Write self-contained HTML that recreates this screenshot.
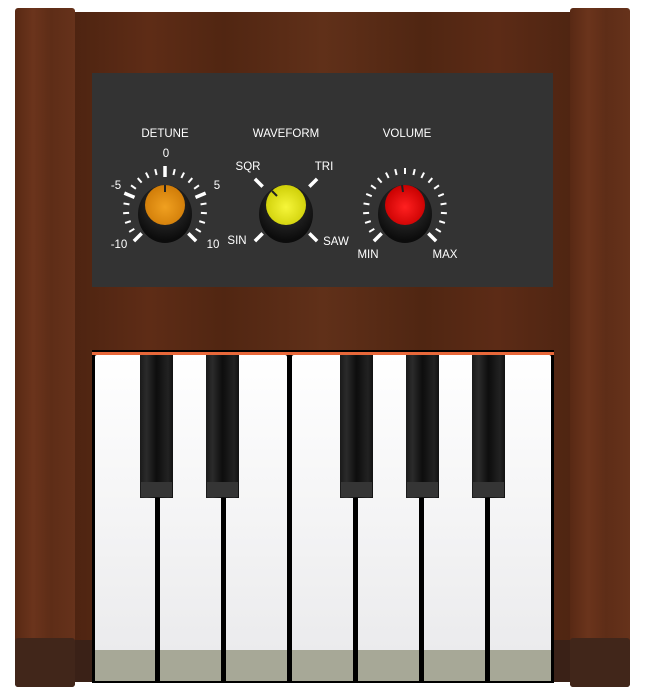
<!DOCTYPE html>
<html><head><meta charset="utf-8"><style>
html,body{margin:0;padding:0;background:#fff;width:645px;height:700px;overflow:hidden}
svg{display:block;font-family:"Liberation Sans",sans-serif}
</style></head><body>
<svg width="645" height="700" viewBox="0 0 645 700" xmlns="http://www.w3.org/2000/svg">
<defs>
<linearGradient id="wood" x1="0" x2="1" y1="0" y2="0">
<stop offset="0" stop-color="#4e2411"/><stop offset="0.15" stop-color="#5e2c16"/><stop offset="0.3" stop-color="#512612"/><stop offset="0.5" stop-color="#603019"/><stop offset="0.7" stop-color="#502612"/><stop offset="0.85" stop-color="#5c2b16"/><stop offset="1" stop-color="#4f2512"/>
</linearGradient>
<linearGradient id="pil" x1="0" x2="1">
<stop offset="0" stop-color="#582914"/><stop offset="0.3" stop-color="#6b341c"/><stop offset="0.6" stop-color="#5e2d17"/><stop offset="1" stop-color="#66321b"/>
</linearGradient>
<linearGradient id="wk" x1="0" x2="0" y1="0" y2="1">
<stop offset="0" stop-color="#ffffff"/><stop offset="1" stop-color="#e9e9eb"/>
</linearGradient>
<linearGradient id="bk" x1="0" x2="1">
<stop offset="0" stop-color="#1a1a1a"/><stop offset="0.2" stop-color="#2b2b2b"/><stop offset="0.5" stop-color="#0d0d0d"/><stop offset="0.85" stop-color="#222"/><stop offset="1" stop-color="#111"/>
</linearGradient>
<radialGradient id="body" cx="0.5" cy="0.35" r="0.6"><stop offset="0" stop-color="#3a3a3a"/><stop offset="1" stop-color="#0c0c0c"/></radialGradient>
<radialGradient id="og" cx="0.5" cy="0.55" r="0.55"><stop offset="0" stop-color="#f0a020"/><stop offset="1" stop-color="#d07c08"/></radialGradient>
<radialGradient id="yg" cx="0.5" cy="0.55" r="0.55"><stop offset="0" stop-color="#f6f63a"/><stop offset="1" stop-color="#cfcf08"/></radialGradient>
<radialGradient id="rg" cx="0.5" cy="0.55" r="0.55"><stop offset="0" stop-color="#ff2020"/><stop offset="1" stop-color="#c80000"/></radialGradient>
</defs>
<rect x="74" y="12" width="498" height="670" fill="url(#wood)"/>
<rect x="74" y="640" width="498" height="42" fill="#3a2117"/>
<rect x="15" y="8" width="60" height="679" rx="3" fill="url(#pil)"/>
<rect x="15" y="638" width="60" height="49" rx="3" fill="#41261a"/>
<rect x="570" y="8" width="60" height="679" rx="3" fill="url(#pil)"/>
<rect x="570" y="638" width="60" height="49" rx="3" fill="#41261a"/>
<rect x="92" y="73" width="461" height="214" fill="#333333"/>
<g fill="#fff" font-size="11.5" text-anchor="middle">
<text x="165" y="137">DETUNE</text><text x="286" y="137">WAVEFORM</text><text x="407" y="137">VOLUME</text>
<text x="166" y="157">0</text><text x="116" y="189">-5</text><text x="217" y="189">5</text>
<text x="119" y="248">-10</text><text x="213" y="248">10</text>
<text x="248" y="170">SQR</text><text x="324" y="170">TRI</text>
<text x="237" y="244">SIN</text><text x="336" y="245">SAW</text>
<text x="368" y="258">MIN</text><text x="445" y="258">MAX</text>
</g>
<g stroke="#fff" stroke-linecap="butt">
<g transform="translate(165,210)">
<g stroke-width="2">
<line x1="0" y1="-36" x2="0" y2="-42" transform="rotate(-121.5)"/><line x1="0" y1="-36" x2="0" y2="-42" transform="rotate(-108)"/><line x1="0" y1="-36" x2="0" y2="-42" transform="rotate(-94.5)"/><line x1="0" y1="-36" x2="0" y2="-42" transform="rotate(-81)"/><line x1="0" y1="-36" x2="0" y2="-42" transform="rotate(-54)"/><line x1="0" y1="-36" x2="0" y2="-42" transform="rotate(-40.5)"/><line x1="0" y1="-36" x2="0" y2="-42" transform="rotate(-27)"/><line x1="0" y1="-36" x2="0" y2="-42" transform="rotate(-13.5)"/>
<line x1="0" y1="-36" x2="0" y2="-42" transform="rotate(121.5)"/><line x1="0" y1="-36" x2="0" y2="-42" transform="rotate(108)"/><line x1="0" y1="-36" x2="0" y2="-42" transform="rotate(94.5)"/><line x1="0" y1="-36" x2="0" y2="-42" transform="rotate(81)"/><line x1="0" y1="-36" x2="0" y2="-42" transform="rotate(54)"/><line x1="0" y1="-36" x2="0" y2="-42" transform="rotate(40.5)"/><line x1="0" y1="-36" x2="0" y2="-42" transform="rotate(27)"/><line x1="0" y1="-36" x2="0" y2="-42" transform="rotate(13.5)"/>
</g>
<g stroke-width="3.5">
<line x1="0" y1="-33" x2="0" y2="-44" transform="rotate(-135)"/><line x1="0" y1="-33" x2="0" y2="-44" transform="rotate(-67.5)"/><line x1="0" y1="-33" x2="0" y2="-44"/><line x1="0" y1="-33" x2="0" y2="-44" transform="rotate(67.5)"/><line x1="0" y1="-33" x2="0" y2="-44" transform="rotate(135)"/>
</g></g>
<g transform="translate(286,210)" stroke-width="3.5">
<line x1="0" y1="-33" x2="0" y2="-44" transform="rotate(-135)"/><line x1="0" y1="-33" x2="0" y2="-44" transform="rotate(-45)"/><line x1="0" y1="-33" x2="0" y2="-44" transform="rotate(45)"/><line x1="0" y1="-33" x2="0" y2="-44" transform="rotate(135)"/>
</g>
<g transform="translate(405,210)">
<g stroke-width="2">
<line x1="0" y1="-36" x2="0" y2="-42" transform="rotate(-121.5)"/><line x1="0" y1="-36" x2="0" y2="-42" transform="rotate(-108)"/><line x1="0" y1="-36" x2="0" y2="-42" transform="rotate(-94.5)"/><line x1="0" y1="-36" x2="0" y2="-42" transform="rotate(-81)"/><line x1="0" y1="-36" x2="0" y2="-42" transform="rotate(-67.5)"/><line x1="0" y1="-36" x2="0" y2="-42" transform="rotate(-54)"/><line x1="0" y1="-36" x2="0" y2="-42" transform="rotate(-40.5)"/><line x1="0" y1="-36" x2="0" y2="-42" transform="rotate(-27)"/><line x1="0" y1="-36" x2="0" y2="-42" transform="rotate(-13.5)"/><line x1="0" y1="-36" x2="0" y2="-42"/>
<line x1="0" y1="-36" x2="0" y2="-42" transform="rotate(121.5)"/><line x1="0" y1="-36" x2="0" y2="-42" transform="rotate(108)"/><line x1="0" y1="-36" x2="0" y2="-42" transform="rotate(94.5)"/><line x1="0" y1="-36" x2="0" y2="-42" transform="rotate(81)"/><line x1="0" y1="-36" x2="0" y2="-42" transform="rotate(67.5)"/><line x1="0" y1="-36" x2="0" y2="-42" transform="rotate(54)"/><line x1="0" y1="-36" x2="0" y2="-42" transform="rotate(40.5)"/><line x1="0" y1="-36" x2="0" y2="-42" transform="rotate(27)"/><line x1="0" y1="-36" x2="0" y2="-42" transform="rotate(13.5)"/>
</g>
<g stroke-width="3.5"><line x1="0" y1="-33" x2="0" y2="-44" transform="rotate(-135)"/><line x1="0" y1="-33" x2="0" y2="-44" transform="rotate(135)"/></g>
</g>
</g>
<g>
<ellipse cx="165" cy="214" rx="27" ry="29" fill="url(#body)"/>
<circle cx="165" cy="205" r="20" fill="url(#og)"/>
<line x1="165" y1="185" x2="165" y2="192" stroke="#222" stroke-width="2"/>
<ellipse cx="286" cy="214" rx="27" ry="29" fill="url(#body)"/>
<circle cx="286" cy="205" r="20" fill="url(#yg)"/>
<line x1="272" y1="191" x2="277" y2="196" stroke="#222" stroke-width="2"/>
<ellipse cx="405" cy="214" rx="27" ry="29" fill="url(#body)"/>
<circle cx="405" cy="205" r="20" fill="url(#rg)"/>
<line x1="402" y1="185" x2="403" y2="192" stroke="#222" stroke-width="2"/>
</g>
<rect x="92" y="350" width="462" height="333" fill="#000"/>
<rect x="92" y="352" width="462" height="3" fill="#e8683a"/>
<g>
<rect x="95" y="355" width="60" height="326" rx="2" fill="url(#wk)"/>
<rect x="160" y="355" width="61" height="326" rx="2" fill="url(#wk)"/>
<rect x="226" y="355" width="61" height="326" rx="2" fill="url(#wk)"/>
<rect x="292" y="355" width="61" height="326" rx="2" fill="url(#wk)"/>
<rect x="358" y="355" width="61" height="326" rx="2" fill="url(#wk)"/>
<rect x="424" y="355" width="61" height="326" rx="2" fill="url(#wk)"/>
<rect x="490" y="355" width="61" height="326" rx="2" fill="url(#wk)"/>
</g>
<g fill="#a7a897">
<rect x="95" y="650" width="60" height="31"/><rect x="160" y="650" width="61" height="31"/><rect x="226" y="650" width="61" height="31"/><rect x="292" y="650" width="61" height="31"/><rect x="358" y="650" width="61" height="31"/><rect x="424" y="650" width="61" height="31"/><rect x="490" y="650" width="61" height="31"/>
</g>
<g>
<rect x="140" y="355" width="33" height="143" fill="url(#bk)"/><rect x="141" y="482" width="31" height="15" fill="#353535"/>
<rect x="206" y="355" width="33" height="143" fill="url(#bk)"/><rect x="207" y="482" width="31" height="15" fill="#353535"/>
<rect x="340" y="355" width="33" height="143" fill="url(#bk)"/><rect x="341" y="482" width="31" height="15" fill="#353535"/>
<rect x="406" y="355" width="33" height="143" fill="url(#bk)"/><rect x="407" y="482" width="31" height="15" fill="#353535"/>
<rect x="472" y="355" width="33" height="143" fill="url(#bk)"/><rect x="473" y="482" width="31" height="15" fill="#353535"/>
</g>
</svg>
</body></html>
